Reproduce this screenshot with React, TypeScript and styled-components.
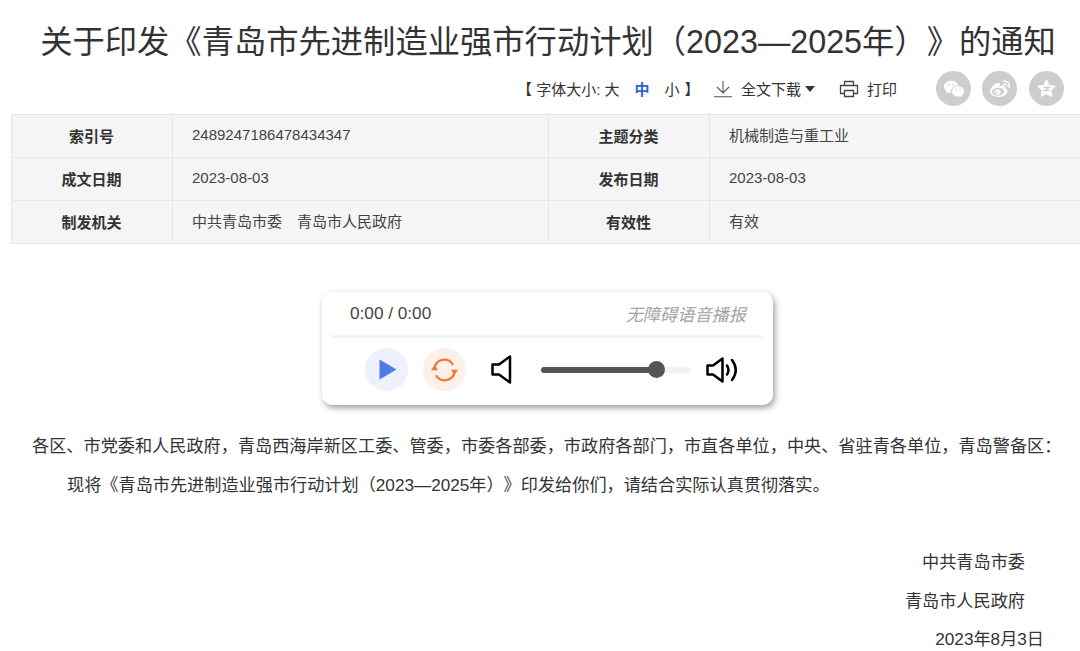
import React from "react";
import styled, { createGlobalStyle } from "styled-components";
import { RiWechatFill, RiWeiboFill } from "react-icons/ri";

const GlobalStyle = createGlobalStyle`
  html, body {
    margin: 0;
    padding: 0;
    background: #fff;
    overflow: hidden;
  }
  body {
    font-family: "Liberation Sans", "Noto Sans CJK SC", sans-serif;
    color: #333;
    text-spacing-trim: space-all;
  }
`;

const Page = styled.div`
  width: 1080px;
  height: 651px;
  overflow: hidden;
`;

const Title = styled.h1`
  margin: 0;
  padding-top: 19px;
  height: 46px;
  font-size: 32.3px;
  line-height: 46px;
  font-weight: 400;
  text-align: center;
  white-space: nowrap;
  color: #333;
  padding-left: 16px;
`;

const ToolBar = styled.div`
  display: flex;
  align-items: center;
  height: 35px;
  margin-top: 6px;
  padding-left: 517px;
  font-size: 15px;
  color: #333;
  white-space: nowrap;
`;

const SizePicker = styled.div`
  display: flex;
  align-items: center;
  width: 196px;
`;

const SizeOption = styled.span<{ $active?: boolean }>`
  margin-left: ${p => (p.$active ? "15px" : "0")};
  margin-right: ${p => (p.$active ? "15px" : "0")};
  color: ${p => (p.$active ? "#2b62d9" : "#333")};
  font-weight: ${p => (p.$active ? 700 : 400)};
`;

const ClosingBracket = styled.span`
  margin-left: 5px;
`;

const ToolItem = styled.div<{ $width: number }>`
  display: flex;
  align-items: center;
  gap: 8px;
  width: ${p => p.$width}px;
`;

const Caret = styled.span`
  width: 0;
  height: 0;
  margin-left: -4px;
  border-left: 5px solid transparent;
  border-right: 5px solid transparent;
  border-top: 6px solid #333;
`;

const ShareGroup = styled.div`
  display: flex;
  gap: 11.3px;
`;

const ShareButton = styled.span`
  display: flex;
  align-items: center;
  justify-content: center;
  width: 35px;
  height: 35px;
  border-radius: 50%;
  background: #cdcdcd;
  color: #fff;
  font-size: 22px;
`;

const InfoTable = styled.div`
  display: grid;
  grid-template-columns: 161px 376px 161px 400px;
  grid-auto-rows: 43px;
  margin-top: 8px;
  margin-left: 11px;
  width: 1098px;
  border-top: 1px solid #e6e6e6;
  font-size: 15px;
`;

const LabelCell = styled.div`
  display: flex;
  align-items: center;
  justify-content: center;
  box-sizing: border-box;
  padding: 0 1px 2px 0;
  background: #f5f5f5;
  border-left: 1px solid #e6e6e6;
  border-bottom: 1px solid #e6e6e6;
  font-weight: 700;
  color: #333;
`;

const ValueCell = styled.div`
  display: flex;
  align-items: center;
  box-sizing: border-box;
  padding: 0 0 4px 19px;
  background: #f5f5f5;
  border-left: 1px solid #e6e6e6;
  border-bottom: 1px solid #e6e6e6;
  color: #444;
`;

const Player = styled.div`
  box-sizing: border-box;
  width: 451px;
  height: 113px;
  margin: 48px 0 0 322px;
  padding: 0 11px;
  background: #fff;
  border-radius: 10px;
  box-shadow: 2px 3px 6px rgba(0, 0, 0, 0.38);
`;

const PlayerTop = styled.div`
  display: flex;
  align-items: center;
  justify-content: space-between;
  height: 43px;
  padding: 0 16px 0 17px;
  border-bottom: 3px solid #f2f2f2;
  font-size: 17.2px;
`;

const TimeText = styled.span`
  color: #444;
`;

const PlayerCaption = styled.span`
  color: #a3a3a3;
  font-style: italic;
`;

const Controls = styled.div`
  display: flex;
  align-items: center;
  height: 63px;
  padding-left: 32px;
`;

const RoundButton = styled.span<{ $bg: string; $gap: number }>`
  display: flex;
  align-items: center;
  justify-content: center;
  width: 43px;
  height: 43px;
  margin-right: ${p => p.$gap}px;
  border-radius: 50%;
  background: ${p => p.$bg};
`;

const VolumeSlider = styled.div`
  position: relative;
  width: 150px;
  height: 6px;
  margin: 0 15px 0 29px;
  border-radius: 3px;
  background: #f2f2f2;
`;

const VolumeFill = styled.div`
  height: 100%;
  border-radius: 3px;
  background: #555;
`;

const VolumeThumb = styled.span`
  position: absolute;
  top: -5.5px;
  width: 17px;
  height: 17px;
  margin-left: -8.5px;
  border-radius: 50%;
  background: #555;
`;

const Article = styled.div`
  margin-top: 22px;
  font-size: 17.17px;
  line-height: 38.5px;
  color: #333;
  white-space: nowrap;
`;

const Paragraph = styled.p<{ $indent: number }>`
  margin: 0;
  padding-left: ${p => p.$indent}px;
`;

const Signature = styled.div`
  margin-top: 39px;
  display: flex;
  flex-direction: column;
  align-items: flex-end;
  padding-right: 55px;
`;

const SignDate = styled.span`
  margin-right: -19px;
`;

const DownloadIcon = () => (
  <svg width="20" height="18" viewBox="0 0 20 18" fill="none" stroke="#555" strokeWidth="1.1">
    <path d="M10 1v11.500M4 7l6 6 6-6M1 16.800h18" />
  </svg>
);

const PrintIcon = () => (
  <svg width="20" height="18" viewBox="0 0 20 18" fill="none" stroke="#444" strokeWidth="1.300">
    <path d="M5.500 5V1.500h9V5M5.500 13.500H1.500V5.500h17v8h-4" />
    <path d="M5.500 10.500h9v6h-9z" />
  </svg>
);

const QzoneIcon = () => (
  <svg width="21" height="21" viewBox="0 0 21 21">
    <path fill="#fff" stroke="#fff" strokeWidth="1.200" strokeLinejoin="round" d="M10.500 2l2.600 5.500 5.900.8-4.300 4.100 1.100 5.900-5.300-2.900-5.300 2.900 1.100-5.900L2 8.300l5.900-.8z" />
    <path fill="none" stroke="#cdcdcd" strokeWidth="1.300" d="M7.500 9.400h5.800l-5 3.200h5.400" />
  </svg>
);

const PlayIcon = () => (
  <svg width="20" height="21" viewBox="0 0 20 21">
    <path fill="#4f7be8" d="M2.500 0.500L19.500 10.500L2.500 20.500z" />
  </svg>
);

const RepeatIcon = () => (
  <svg width="29" height="26" viewBox="0 0 29 26" fill="none" stroke="#f3762f" strokeWidth="2.200">
    <path d="M4.500 11A10 10 0 0 1 23 7.700" />
    <path d="M24.500 15A10 10 0 0 1 6 18.300" />
    <path fill="#f3762f" stroke="none" d="M1 13.200h7L4.500 8zM21 12.800h7l-3.500 5.200z" />
  </svg>
);

const MuteIcon = () => (
  <svg width="21" height="29" viewBox="0 0 21 29" fill="none" stroke="#000" strokeWidth="2.500" strokeLinejoin="round">
    <path d="M19 1.500V27.500L8 19.500H1.500V9.500H8z" />
  </svg>
);

const LoudIcon = () => (
  <svg width="33" height="26" viewBox="0 0 33 26" fill="none" stroke="#000" strokeWidth="2.500" strokeLinejoin="round" strokeLinecap="round">
    <path d="M16.500 1.500V24.500L7 17.500H1.500V8.500H7z" />
    <path d="M21 8.500Q24 13 21 17.500" />
    <path d="M26 3Q33.500 13 26 23" />
  </svg>
);

const rows = [
  ["索引号", "2489247186478434347", "主题分类", "机械制造与重工业"],
  ["成文日期", "2023-08-03", "发布日期", "2023-08-03"],
  ["制发机关", "中共青岛市委　青岛市人民政府", "有效性", "有效"],
];

const App: React.FC = () => {
  const volume = 77;

  return (
    <Page>
      <GlobalStyle />
      <Title>关于印发《青岛市先进制造业强市行动计划（2023—2025年）》的通知</Title>
      <ToolBar>
        <SizePicker>
          【 字体大小: 大<SizeOption $active>中</SizeOption><SizeOption>小</SizeOption><ClosingBracket>】</ClosingBracket>
        </SizePicker>
        <ToolItem $width={126}>
          <DownloadIcon />
          全文下载
          <Caret />
        </ToolItem>
        <ToolItem $width={97}>
          <PrintIcon />
          打印
        </ToolItem>
        <ShareGroup>
          <ShareButton><RiWechatFill /></ShareButton>
          <ShareButton><RiWeiboFill /></ShareButton>
          <ShareButton><QzoneIcon /></ShareButton>
        </ShareGroup>
      </ToolBar>
      <InfoTable>
        {rows.map(row => (
          <React.Fragment key={row[0]}>
            <LabelCell>{row[0]}</LabelCell>
            <ValueCell>{row[1]}</ValueCell>
            <LabelCell>{row[2]}</LabelCell>
            <ValueCell>{row[3]}</ValueCell>
          </React.Fragment>
        ))}
      </InfoTable>
      <Player>
        <PlayerTop>
          <TimeText>0:00 / 0:00</TimeText>
          <PlayerCaption>无障碍语音播报</PlayerCaption>
        </PlayerTop>
        <Controls>
          <RoundButton $bg="#ecf1fc" $gap={15}><PlayIcon /></RoundButton>
          <RoundButton $bg="#fdf0e8" $gap={25}><RepeatIcon /></RoundButton>
          <MuteIcon />
          <VolumeSlider>
            <VolumeFill style={{ width: `${volume}%` }} />
            <VolumeThumb style={{ left: `${volume}%` }} />
          </VolumeSlider>
          <LoudIcon />
        </Controls>
      </Player>
      <Article>
        <Paragraph $indent={32}>各区、市党委和人民政府，青岛西海岸新区工委、管委，市委各部委，市政府各部门，市直各单位，中央、省驻青各单位，青岛警备区：</Paragraph>
        <Paragraph $indent={67}>现将《青岛市先进制造业强市行动计划（2023—2025年）》印发给你们，请结合实际认真贯彻落实。</Paragraph>
        <Signature>
          <span>中共青岛市委</span>
          <span>青岛市人民政府</span>
          <SignDate>2023年8月3日</SignDate>
        </Signature>
      </Article>
    </Page>
  );
};

export default App;
